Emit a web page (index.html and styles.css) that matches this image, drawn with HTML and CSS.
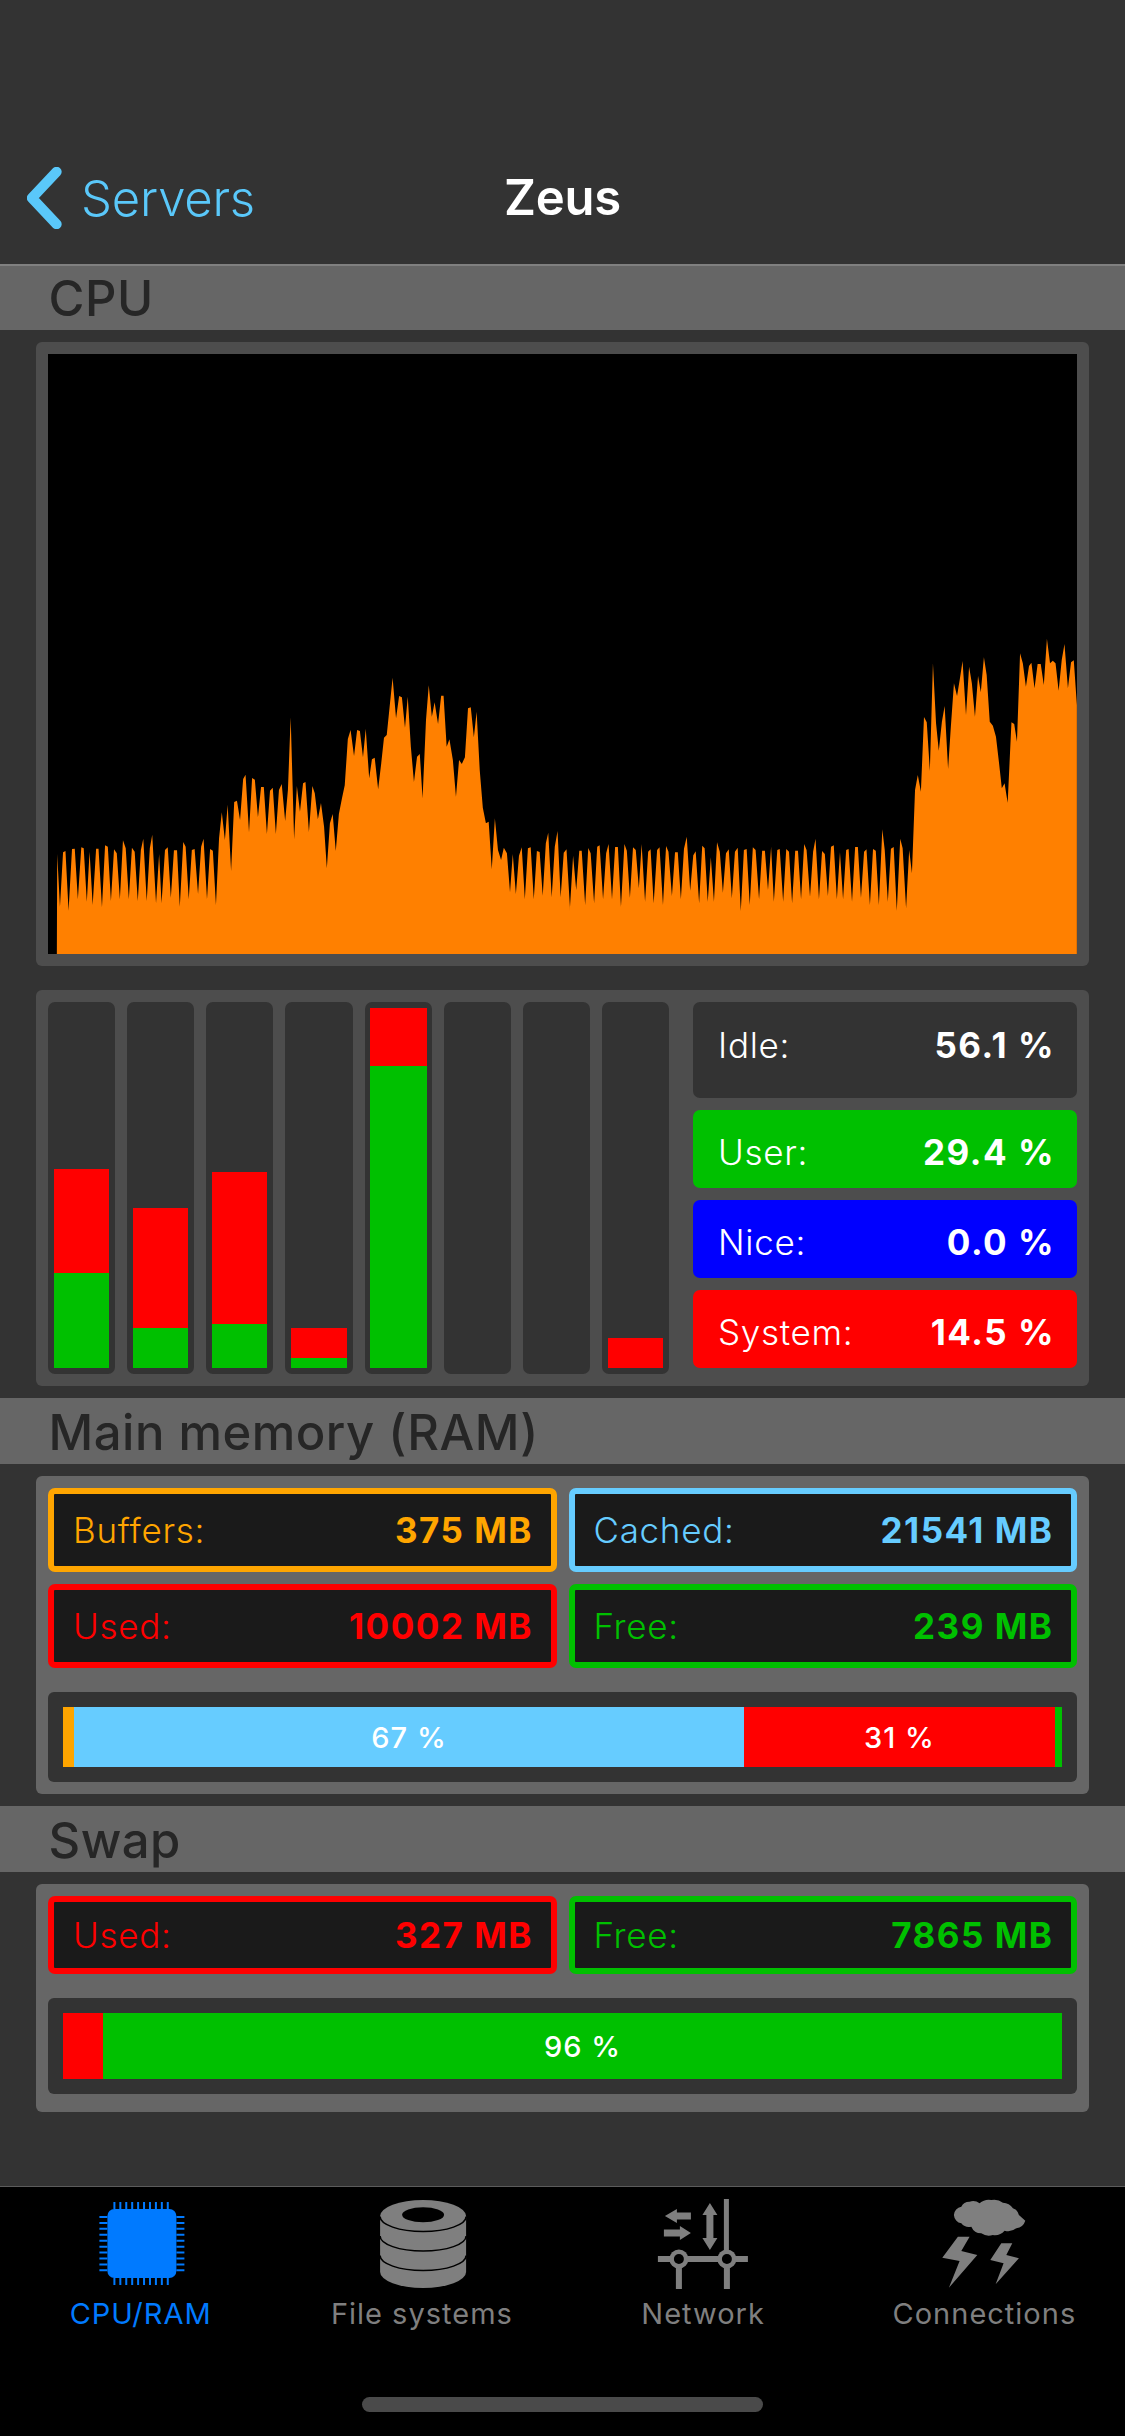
FILE: index.html
```html
<!DOCTYPE html>
<html lang="en">
<head>
<meta charset="utf-8">
<title>Zeus</title>
<link rel="stylesheet" href="styles.css">
</head>
<body>
<div class="app">
  <header class="nav">
    <div class="back">
      <svg class="chevron" viewBox="0 0 36 64"><polyline points="30.5,5 5,32 30.5,59"/></svg>
      <span>Servers</span>
    </div>
    <div class="title">Zeus</div>
  </header>

  <h2 class="band band-first">CPU</h2>
  <section class="stack">
    <div class="panel panel-chart">
      <svg class="chart" viewBox="0 0 1029 600">
        <polygon class="area" transform="translate(-18 276) scale(0.34435 0.33333)" points="78,972 79,672 87,830 96,667 103,663 112,842 122,657 130,656 139,808 149,652 156,655 165,815 173,665 182,825 192,656 199,656 209,832 218,646 226,650 235,813 244,658 252,670 261,808 270,631 278,655 287,808 296,653 304,665 313,813 322,660 329,626 339,813 348,655 355,614 366,820 375,672 382,820 392,660 400,652 409,803 418,661 427,661 435,830 445,636 452,650 461,808 470,660 478,657 488,792 497,650 504,626 514,808 523,657 531,662 540,825 549,625 557,547 566,630 574,524 584,723 593,516 601,512 610,570 619,447 626,434 636,607 645,444 653,449 662,562 671,471 679,471 688,612 697,482 705,473 714,612 723,480 731,462 741,573 749,480 757,262 767,628 775,468 784,545 793,460 800,456 810,606 820,468 827,490 836,568 845,519 854,590 862,715 871,580 879,552 888,663 897,552 906,505 914,466 923,327 931,300 941,378 950,300 958,303 967,382 975,296 985,445 993,388 1001,383 1011,478 1020,400 1028,323 1036,315 1053,143 1063,265 1072,198 1080,202 1089,293 1097,200 1106,350 1115,456 1124,380 1132,372 1140,505 1150,270 1158,166 1167,260 1175,217 1185,282 1194,197 1201,197 1210,350 1218,328 1228,390 1237,500 1246,390 1254,402 1263,382 1272,235 1280,232 1289,322 1297,245 1306,420 1315,533 1324,580 1332,575 1341,718 1350,565 1359,660 1368,690 1376,653 1385,670 1394,787 1402,672 1411,792 1420,677 1428,652 1437,808 1446,655 1454,652 1463,808 1472,663 1480,666 1489,797 1498,640 1505,608 1515,802 1524,650 1532,603 1541,802 1550,668 1558,658 1568,832 1570,972"/>
        <polygon class="area" transform="translate(522 266) scale(0.34435 0.33333)" points="0,1002 0,860 9,707 18,810 27,692 34,692 44,855 53,684 60,700 70,850 79,680 86,676 96,838 105,700 112,672 122,838 131,681 139,681 148,860 158,672 165,692 174,833 183,682 191,690 200,805 208,672 218,845 227,695 234,688 243,850 253,690 260,682 270,855 279,678 286,695 296,828 305,697 313,697 322,838 331,686 339,650 349,812 358,706 365,694 375,850 384,677 391,685 400,845 409,712 418,845 427,667 435,695 444,818 453,700 461,688 470,835 479,695 487,683 496,873 505,690 513,687 522,855 531,682 539,690 549,838 558,692 566,692 575,810 584,680 592,845 602,690 609,687 619,845 628,687 636,695 645,850 654,692 662,692 671,838 680,672 687,690 697,830 706,695 713,656 723,838 732,693 740,702 749,828 758,680 766,676 775,838 784,697 793,838 802,690 809,687 819,845 828,681 836,681 845,833 854,695 861,688 871,855 880,687 888,692 897,855 907,628 914,690 923,845 932,686 940,681 949,872 959,656 966,685 976,865 985,690 993,760 1002,510 1010,465 1019,515 1028,291 1036,307 1045,452 1054,130 1063,310 1071,392 1080,305 1088,258 1098,447 1106,320 1115,190 1124,228 1132,178 1140,123 1150,285 1159,140 1167,190 1176,290 1185,168 1193,217 1202,112 1210,165 1219,305 1228,317 1237,350 1246,430 1254,505 1262,490 1271,548 1282,307 1290,312 1298,365 1307,100 1315,130 1324,200 1333,138 1340,128 1349,205 1358,132 1367,132 1376,195 1385,56 1394,130 1402,122 1410,130 1419,212 1428,120 1436,72 1446,205 1455,127 1463,121 1472,255 1472,1002"/>
      </svg>
    </div>

    <div class="panel panel-load">
      <div class="cores">
        <div class="core"><i class="seg red" style="height:104px"></i><i class="seg green" style="height:95px"></i></div>
        <div class="core"><i class="seg red" style="height:120px"></i><i class="seg green" style="height:40px"></i></div>
        <div class="core"><i class="seg red" style="height:152px"></i><i class="seg green" style="height:44px"></i></div>
        <div class="core"><i class="seg red" style="height:30px"></i><i class="seg green" style="height:10px"></i></div>
        <div class="core core-wide"><i class="seg red" style="height:58px"></i><i class="seg green" style="height:302px"></i></div>
        <div class="core"></div>
        <div class="core"></div>
        <div class="core"><i class="seg red" style="height:30px"></i></div>
      </div>
      <div class="stats">
        <div class="stat stat-idle"><span class="lbl">Idle:</span><b class="val">56.1 %</b></div>
        <div class="stat stat-user"><span class="lbl">User:</span><b class="val">29.4 %</b></div>
        <div class="stat stat-nice"><span class="lbl">Nice:</span><b class="val">0.0 %</b></div>
        <div class="stat stat-system"><span class="lbl">System:</span><b class="val">14.5 %</b></div>
      </div>
    </div>
  </section>

  <h2 class="band">Main memory (RAM)</h2>
  <section class="stack">
    <div class="panel panel-mem">
      <div class="boxes">
        <div class="box box-tall c-orange"><span class="lbl">Buffers:</span><b class="val">375 MB</b></div>
        <div class="box box-tall c-blue"><span class="lbl">Cached:</span><b class="val">21541 MB</b></div>
        <div class="box box-tall c-red"><span class="lbl">Used:</span><b class="val">10002 MB</b></div>
        <div class="box box-tall c-green"><span class="lbl">Free:</span><b class="val">239 MB</b></div>
      </div>
      <div class="track">
        <div class="bar bar-ram">
          <i class="part orange" style="width:11px"></i>
          <i class="part blue" style="width:670px">67 %</i>
          <i class="part red" style="width:311px">31 %</i>
          <i class="part green" style="width:7px"></i>
        </div>
      </div>
    </div>
  </section>

  <h2 class="band">Swap</h2>
  <section class="stack">
    <div class="panel panel-swap">
      <div class="boxes">
        <div class="box c-red"><span class="lbl">Used:</span><b class="val">327 MB</b></div>
        <div class="box c-green"><span class="lbl">Free:</span><b class="val">7865 MB</b></div>
      </div>
      <div class="track">
        <div class="bar bar-swap">
          <i class="part red" style="width:40px"></i>
          <i class="part green" style="width:959px">96 %</i>
        </div>
      </div>
    </div>
  </section>

  <div class="spacer"></div>

  <nav class="tabs">
    <div class="tab tab-active">
      <svg class="tab-icon" viewBox="80.6 2198 120 92">
        <rect x="107" y="2209" width="69" height="69" rx="7" fill="#007aff"/>
        <g class="pins">
          <line x1="113" y1="2205.5" x2="169" y2="2205.5"/>
          <line x1="113" y1="2281.5" x2="169" y2="2281.5"/>
          <line x1="103" y1="2216" x2="103" y2="2272"/>
          <line x1="180" y1="2216" x2="180" y2="2272"/>
        </g>
      </svg>
      <span>CPU/RAM</span>
    </div>
    <div class="tab">
      <svg class="tab-icon" viewBox="361.9 2198 120 92">
        <path class="gray" d="M380 2216 V2272 A43 16 0 0 0 466 2272 V2216 A43 16 0 0 0 380 2216 Z"/>
        <ellipse cx="423" cy="2214.7" rx="21" ry="7.5" fill="#000"/>
        <path class="disk-line" d="M380 2216.5 A43 15 0 0 0 466 2216.5 M380 2236 A43 15 0 0 0 466 2236 M380 2255.5 A43 15 0 0 0 466 2255.5"/>
      </svg>
      <span>File systems</span>
    </div>
    <div class="tab">
      <svg class="tab-icon" viewBox="643.1 2198 120 92">
        <path class="gray" d="M724 2199 H729 V2289 H724 Z M658 2256 H748 V2262 H658 Z M676 2259 H682 V2289 H676 Z M724 2259 H730 V2289 H724 Z"/>
        <circle class="gray" cx="679" cy="2259" r="9.5"/>
        <circle class="gray" cx="727" cy="2259" r="9.5"/>
        <circle cx="679" cy="2259" r="5" fill="#000"/>
        <circle cx="727" cy="2259" r="5" fill="#000"/>
        <path class="gray" d="M665 2216 L677 2209 V2212.5 H691 V2219.5 H677 V2223 Z M691 2233 L680 2226 V2229.5 H664 V2236.5 H680 V2240 Z M710 2203 L717.5 2215 H713.5 V2238 H717.5 L710 2250 L702.5 2238 H706.5 V2215 H702.5 Z"/>
      </svg>
      <span>Network</span>
    </div>
    <div class="tab">
      <svg class="tab-icon" viewBox="924.4 2198 120 92">
        <path class="gray" d="M954.3 2215 A9 9 0 0 1 961.7 2206.7 A9 9 0 0 1 970 2201.7 A11 11 0 0 1 980 2203.3 A14 14 0 0 1 991.7 2200 A14 14 0 0 1 1003.3 2202.7 A12 12 0 0 1 1013.3 2208.3 A9 9 0 0 1 1019.3 2215 L1025.7 2220.7 A11 11 0 0 1 1016.7 2228.3 A13 13 0 0 1 1005 2230.7 A13 13 0 0 1 993.3 2235 A13 13 0 0 1 981.7 2233.3 A11 11 0 0 1 971.7 2226.7 A10 10 0 0 1 961.7 2223.3 A9 9 0 0 1 954.3 2215 Z"/>
        <polygon class="gray" points="958.3,2236.7 970,2236.7 961.7,2251 977.7,2255 949.3,2287.7 960,2261 942.7,2257.7"/>
        <polygon class="gray" points="1001.7,2243.3 1012.7,2243.3 1006.7,2255 1019.3,2258.3 996,2284.3 1004,2263.3 990.7,2260"/>
      </svg>
      <span>Connections</span>
    </div>
    <div class="home"></div>
  </nav>
</div>
</body>
</html>
```
FILE: styles.css
```css
* { box-sizing: border-box; }

html, body { margin: 0; padding: 0; background: #333; }

.app {
  width: 1125px;
  height: 2436px;
  display: flex;
  flex-direction: column;
  background: #333;
  font-family: Inter, "Liberation Sans", sans-serif;
  overflow: hidden;
}

.nav {
  position: relative;
  height: 264px;
  flex: none;
}

.back {
  position: absolute;
  left: 27px;
  top: 167px;
  display: flex;
  align-items: center;
  gap: 19px;
  height: 62px;
  color: #5ac8fa;
  font-size: 49px;
  font-weight: 300;
  letter-spacing: -0.2px;
}

.chevron { width: 35px; height: 62px; }
.chevron polyline {
  fill: none;
  stroke: #5ac8fa;
  stroke-width: 10.5;
  stroke-linecap: round;
  stroke-linejoin: round;
}

.title {
  position: absolute;
  left: 0;
  right: 0;
  top: 167px;
  height: 62px;
  line-height: 62px;
  text-align: center;
  color: #fff;
  font-size: 49px;
  font-weight: 600;
  letter-spacing: -0.2px;
}

.band {
  flex: none;
  height: 66px;
  margin: 0;
  padding: 3px 0 0 48.5px;
  background: #666;
  color: #262626;
  font-size: 49px;
  font-weight: 500;
  line-height: 63px;
  letter-spacing: 0.5px;
}

.band-first { border-top: 2px solid #808080; padding-top: 2px; line-height: 62px; }

.stack {
  display: flex;
  flex-direction: column;
  gap: 24px;
  padding: 12px 36px;
  flex: none;
}

.panel {
  background: #4d4d4d;
  border-radius: 6px;
  padding: 12px;
}

.panel-chart { height: 624px; }

.chart { display: block; width: 1029px; height: 600px; background: #000; }
.area { fill: #ff8000; }

.panel-load { display: flex; gap: 24px; height: 396px; }

.cores {
  display: grid;
  grid-template-columns: repeat(8, 1fr);
  gap: 12px;
  width: 621px;
  height: 372px;
}

.core {
  display: flex;
  flex-direction: column;
  justify-content: flex-end;
  padding: 6px;
  background: #333;
  border-radius: 7px;
}

.core-wide { padding: 6px 5px; }

.seg { display: block; flex: none; }
.red { background: #f00; }
.green { background: #00c000; }
.blue { background: #66ccff; }
.orange { background: #ffa500; }

.stats { display: flex; flex-direction: column; gap: 12px; width: 384px; }

.stat {
  display: flex;
  align-items: center;
  justify-content: space-between;
  height: 78px;
  padding: 6px 22px 0 25px;
  border-radius: 7px;
  color: #fff;
}

.stat-idle { height: 96px; background: #333; padding: 0 22px 11px 25px; }
.stat-user { background: #00c000; }
.stat-nice { background: #00f; }
.stat-system { background: #f00; }

.lbl { font-size: 35px; font-weight: 300; letter-spacing: 0.7px; }
.val { font-size: 35px; font-weight: 700; letter-spacing: 1.5px; }

.panel-mem { background: #666; height: 318px; }
.panel-swap { background: #666; height: 228px; }

.boxes {
  display: grid;
  grid-template-columns: 1fr 1fr;
  gap: 12px;
}

.box {
  display: flex;
  align-items: center;
  justify-content: space-between;
  height: 78px;
  padding: 0 17.5px 0 19px;
  background: #1a1a1a;
  border: 6px solid currentColor;
  border-radius: 7px;
}

.box-tall { height: 84px; }

.c-orange { color: #ffa500; }
.c-blue { color: #66ccff; }
.c-red { color: #f00; }
.c-green { color: #00c000; }

.track {
  margin-top: 24px;
  padding: 15px;
  background: #333;
  border-radius: 6px;
}

.bar { display: flex; width: 999px; }
.bar-ram { height: 60px; }
.bar-swap { height: 66px; }

.part {
  display: flex;
  align-items: center;
  justify-content: center;
  flex: none;
  color: #fff;
  font-size: 29px;
  font-style: normal;
  font-weight: 500;
  letter-spacing: 1px;
}

.spacer { flex: 1; }

.tabs {
  position: relative;
  flex: none;
  height: 250px;
  display: grid;
  grid-template-columns: repeat(4, 1fr);
  align-items: start;
  background: #000;
  border-top: 1px solid #5c5c5c;
}

.tab {
  display: flex;
  flex-direction: column;
  align-items: center;
  padding-top: 11px;
  color: #7f7f7f;
  font-size: 29px;
  font-weight: 400;
  line-height: 36px;
  letter-spacing: 1px;
}

.tab-active { color: #007aff; }

.tab-icon { display: block; width: 120px; height: 92px; margin-bottom: 6px; }

.gray { fill: #7f7f7f; }

.pins line { stroke: #007aff; stroke-width: 7; stroke-dasharray: 2 3.93; }
.pins line:nth-child(n+3) { stroke-width: 8; }

.disk-line { fill: none; stroke: #000; stroke-width: 1.5; }

.home {
  position: absolute;
  left: 362px;
  top: 210px;
  width: 401px;
  height: 15px;
  border-radius: 8px;
  background: #4a4a4a;
}
```
